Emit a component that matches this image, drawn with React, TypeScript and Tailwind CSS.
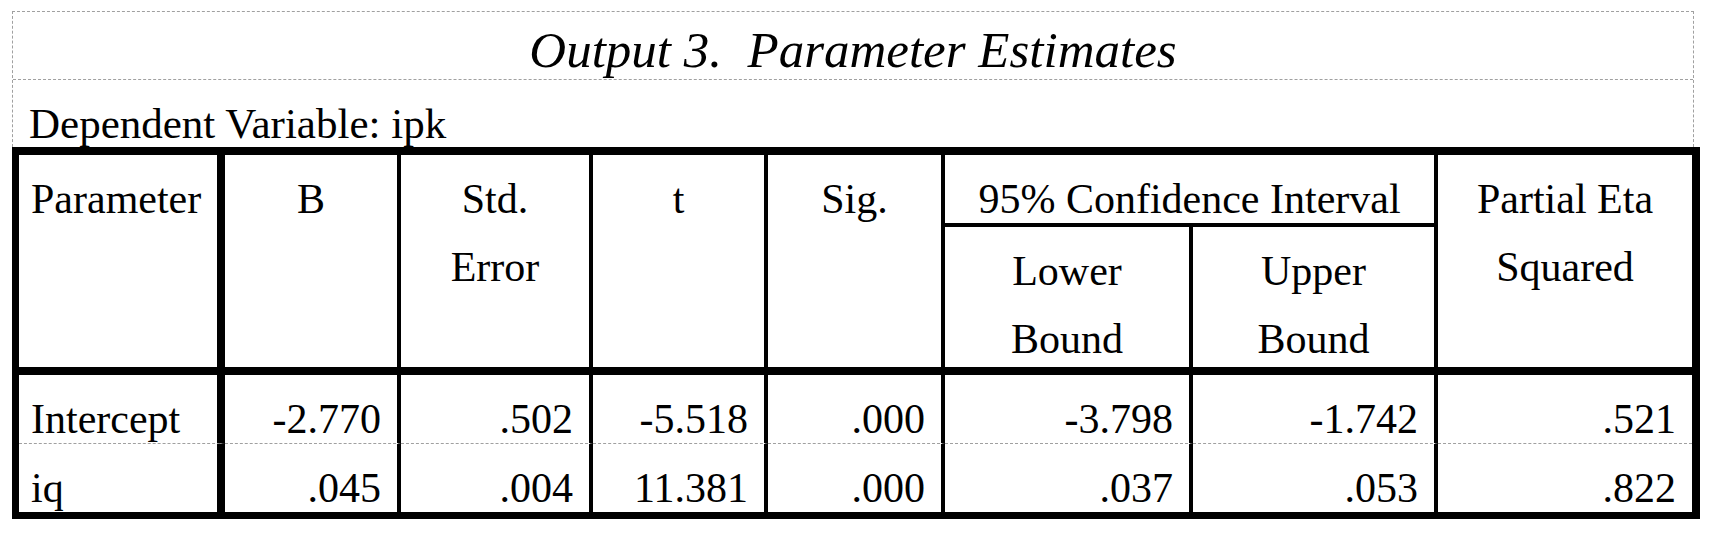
import React from "react";

const serif = "font-['Liberation_Serif','Times_New_Roman',serif] text-black";

// one line of table text, 68px pitch, baseline 58px from the top
const Line = ({ children }: { children: React.ReactNode }) => (
  <div className="h-[68px] pt-[23px] text-[42px] leading-none whitespace-nowrap">{children}</div>
);

const rightBorder = [
  "border-r-[8px]",
  "border-r-[4px]",
  "border-r-[4px]",
  "border-r-[4px]",
  "border-r-[4px]",
  "border-r-[4px]",
  "border-r-[4px]",
  "",
];

const rows = [
  ["Intercept", "-2.770", ".502", "-5.518", ".000", "-3.798", "-1.742", ".521"],
  ["iq", ".045", ".004", "11.381", ".000", ".037", ".053", ".822"],
];

const HeadCell = ({ lines, col, left }: { lines: string[]; col: number; left?: boolean }) => (
  <div className={`row-span-2 border-b-[8px] border-black ${rightBorder[col]} ${left ? "pl-[12px] text-left" : "text-center"}`}>
    {lines.map((l) => (
      <Line key={l}>{l}</Line>
    ))}
  </div>
);

export default function App() {
  return (
    <div className={`min-h-screen bg-white pl-[12px] pt-[11px] ${serif}`}>
      <div className="w-[1682px] border-x border-t border-dashed border-[#a0a0a0]">
        <div className="h-[68px] border-b border-dashed border-[#a0a0a0] pt-[13px] text-center text-[51px] italic leading-none">
          Output 3.&nbsp; Parameter Estimates
        </div>
        <div className="h-[67px] pl-[16px] pt-[22px] text-[43px] leading-none">Dependent Variable: ipk</div>
      </div>

      <div className="grid w-fit grid-cols-[206px_176px_192px_175px_177px_248px_245px_254px] grid-rows-[72px_148px_69px_68px] border-l-[7px] border-t-[8px] border-r-[8px] border-b-[7px] border-black">
        <HeadCell lines={["Parameter"]} col={0} left />
        <HeadCell lines={["B"]} col={1} />
        <HeadCell lines={["Std.", "Error"]} col={2} />
        <HeadCell lines={["t"]} col={3} />
        <HeadCell lines={["Sig."]} col={4} />
        <div className="col-span-2 border-b-[4px] border-r-[4px] border-black text-center">
          <Line>95% Confidence Interval</Line>
        </div>
        <HeadCell lines={["Partial Eta", "Squared"]} col={7} />
        <div className="border-b-[8px] border-r-[4px] border-black pb-[4px] text-center">
          <Line>Lower</Line>
          <Line>Bound</Line>
        </div>
        <div className="border-b-[8px] border-r-[4px] border-black pb-[4px] text-center">
          <Line>Upper</Line>
          <Line>Bound</Line>
        </div>

        {rows.map((r, ri) =>
          r.map((v, ci) => (
            <div
              key={`${ri}-${ci}`}
              className={`border-black ${rightBorder[ci]} ${
                ri === 0 ? "border-b [border-bottom-style:dashed] border-b-[#a0a0a0]" : ""
              } ${ci === 0 ? "pl-[12px] text-left" : "pr-[16px] text-right"}`}
            >
              <Line>{v}</Line>
            </div>
          ))
        )}
      </div>
    </div>
  );
}
